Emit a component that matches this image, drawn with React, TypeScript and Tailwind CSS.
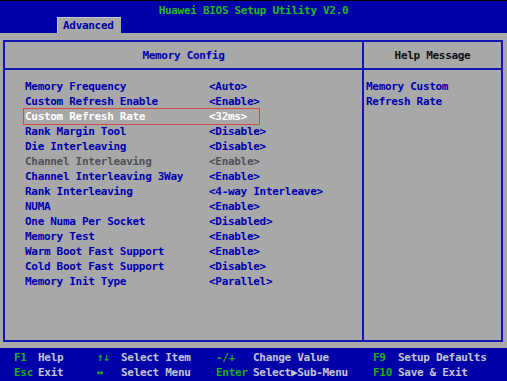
import React from "react";

type Row = { label: string; value: string; state?: "sel" | "dis" };

const rows: Row[] = [
  { label: "Memory Frequency", value: "<Auto>" },
  { label: "Custom Refresh Enable", value: "<Enable>" },
  { label: "Custom Refresh Rate", value: "<32ms>", state: "sel" },
  { label: "Rank Margin Tool", value: "<Disable>" },
  { label: "Die Interleaving", value: "<Disable>" },
  { label: "Channel Interleaving", value: "<Enable>", state: "dis" },
  { label: "Channel Interleaving 3Way", value: "<Enable>" },
  { label: "Rank Interleaving", value: "<4-way Interleave>" },
  { label: "NUMA", value: "<Enable>" },
  { label: "One Numa Per Socket", value: "<Disabled>" },
  { label: "Memory Test", value: "<Enable>" },
  { label: "Warm Boot Fast Support", value: "<Enable>" },
  { label: "Cold Boot Fast Support", value: "<Disable>" },
  { label: "Memory Init Type", value: "<Parallel>" },
];

const font = { fontFamily: '"DejaVu Sans Mono", "Liberation Mono", monospace' };

function Key({ k, d, kw, dw }: { k: string; d: string; kw: string; dw: string }) {
  return (
    <div className="flex">
      <span className={`${kw} shrink-0 text-[#18b018]`}>{k}</span>
      <span className={`${dw} shrink-0 text-[#c4c4d4]`}>{d}</span>
    </div>
  );
}

export default function App() {
  return (
    <div
      className="w-[507px] h-[381px] overflow-hidden flex flex-col bg-[#a8a8a8] text-[11px] tracking-[-0.3px] font-bold leading-[15px] whitespace-pre"
      style={font}
    >
      {/* Top bar */}
      <div className="h-[33px] bg-[#0000a8] border-t border-black flex flex-col relative">
        <div className="h-[16px] flex items-center justify-center text-[#20b820] pt-[3px]">
          Huawei BIOS Setup Utility V2.0
        </div>
        <div className="flex-1 flex pl-[57px]">
          <div className="w-[64px] bg-[#a8a8a8] border-t border-l border-[#c8c8c8] text-[#0000b0] pl-[5px] flex items-center">
            Advanced
          </div>
        </div>
      </div>

      {/* Body */}
      <div className="flex-1 pt-[7px] pb-[6px] pl-[3px] pr-[4px] flex">
        <div className="flex-1 border-2 border-[#1414b4] flex flex-col">
          <div className="h-[28px] flex border-b-2 border-[#1414b4]">
            <div className="w-[359px] border-r-2 border-[#1414b4] flex items-center justify-center text-[#0000b0]">
              Memory Config
            </div>
            <div className="flex-1 flex items-center justify-center text-[#101010]">
              Help Message
            </div>
          </div>
          <div className="flex-1 flex">
            <div className="w-[359px] border-r-2 border-[#1414b4] pt-[8.5px] pl-[20px]">
              {rows.map((r) => {
                const color =
                  r.state === "sel"
                    ? "text-white"
                    : r.state === "dis"
                    ? "text-[#505058]"
                    : "text-[#0000b0]";
                return (
                  <div key={r.label} className={`h-[15.06px] flex ${color}`}>
                    <div
                      className={`flex items-center w-[235px] -ml-[1px] pl-[1px] ${
                        r.state === "sel" ? "outline outline-1 outline-[#d84848]" : ""
                      }`}
                    >
                      <span className="w-[184px] shrink-0">{r.label}</span>
                      <span className="shrink-0">{r.value}</span>
                    </div>
                  </div>
                );
              })}
            </div>
            <div className="flex-1 pt-[8.5px] pl-[2px] text-[#0000b0]">
              <div className="h-[15.06px] flex items-center">Memory Custom</div>
              <div className="h-[15.06px] flex items-center">Refresh Rate</div>
            </div>
          </div>
        </div>
      </div>

      {/* Footer */}
      <div className="h-[33px] bg-[#0000a8] pt-[1.5px] pl-[14px] flex">
        <div className="flex flex-col">
          <div className="h-[15px] flex items-center">
            <Key k="F1" d="Help" kw="w-[24px]" dw="w-[59px]" />
          </div>
          <div className="h-[15px] flex items-center">
            <Key k="Esc" d="Exit" kw="w-[24px]" dw="w-[59px]" />
          </div>
        </div>
        <div className="flex flex-col">
          <div className="h-[15px] flex items-center">
            <Key k="↑↓" d="Select Item" kw="w-[24px]" dw="w-[95px]" />
          </div>
          <div className="h-[15px] flex items-center">
            <Key k="↔" d="Select Menu" kw="w-[24px]" dw="w-[95px]" />
          </div>
        </div>
        <div className="flex flex-col">
          <div className="h-[15px] flex items-center">
            <Key k="-/+" d="Change Value" kw="w-[37px]" dw="w-[120px]" />
          </div>
          <div className="h-[15px] flex items-center">
            <Key k="Enter" d="Select▶Sub-Menu" kw="w-[37px]" dw="w-[120px]" />
          </div>
        </div>
        <div className="flex flex-col">
          <div className="h-[15px] flex items-center">
            <Key k="F9" d="Setup Defaults" kw="w-[25px]" dw="w-[100px]" />
          </div>
          <div className="h-[15px] flex items-center">
            <Key k="F10" d="Save & Exit" kw="w-[25px]" dw="w-[100px]" />
          </div>
        </div>
      </div>
    </div>
  );
}
